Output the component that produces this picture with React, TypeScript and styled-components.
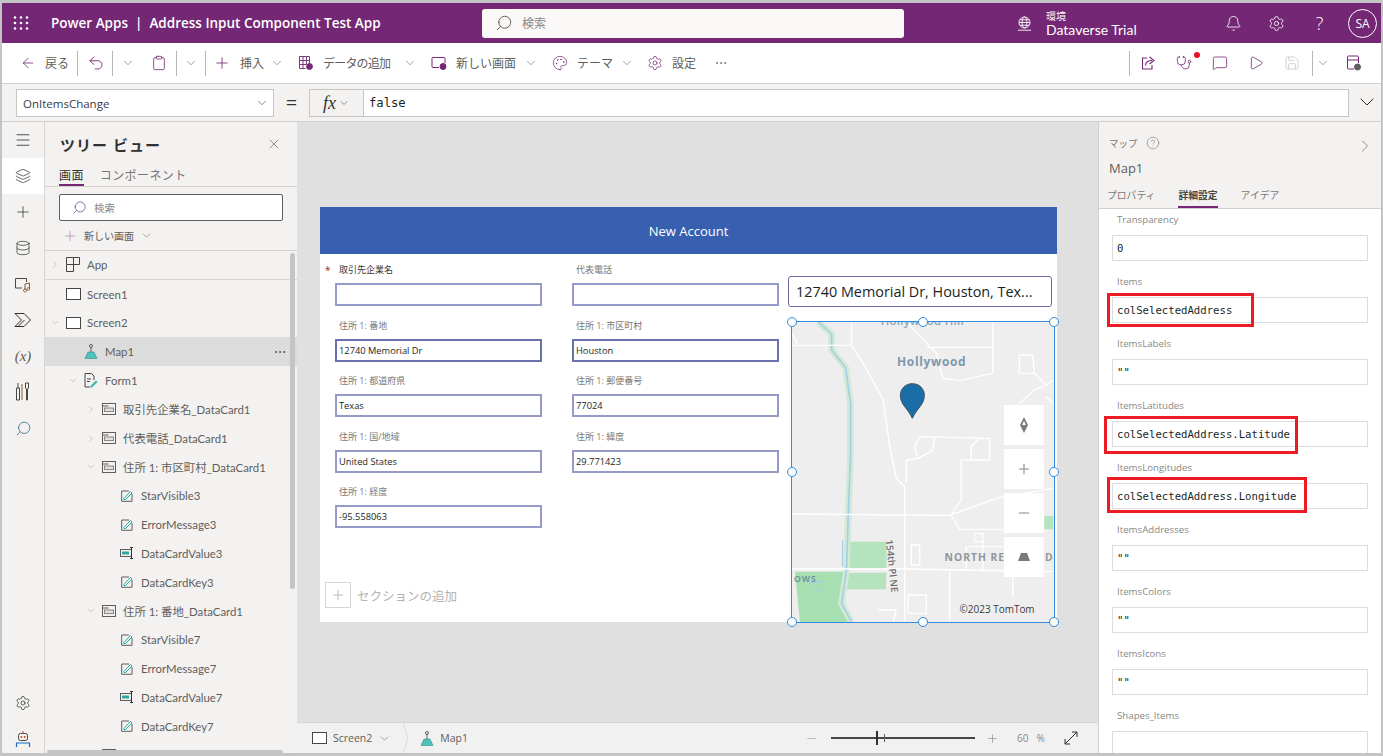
import React from 'react';
import styled, { createGlobalStyle } from 'styled-components';
import {
  ArrowLeft, Bell, ChevronDown, ChevronRight, Clipboard, CircleHelp, Database, Layers, Menu,
  MessageSquare, Minus, MoreHorizontal, Palette, Play, Plus, Save, Search, Settings, Stethoscope, Undo2, X,
} from 'lucide-react';

const SANS = `"Open Sans", "Noto Sans CJK JP", sans-serif`;
const NARROW = `"Lato", "Noto Sans CJK JP", sans-serif`;
const MONO = `"DejaVu Sans Mono", "Liberation Mono", monospace`;
const PURPLE = '#742774';

const Global = createGlobalStyle`
  html, body { margin: 0; padding: 0; background: #c4c4c4; }
  * { box-sizing: border-box; }
  body { font-family: ${SANS}; }
`;

const Root = styled.div`
  width: 1383px; height: 756px; padding: 3px 2px; background: #c4c4c4;
  display: flex; flex-direction: column; overflow: hidden; color: #605e5c; font-size: 12px;
`;

/* ---- top bar ---- */
const TopBar = styled.header`
  height: 40px; flex: none; background: ${PURPLE}; color: #fff; display: flex; align-items: center;
`;
const Waffle = styled.svg`margin-left: 11px; flex: none;`;
const AppTitle = styled.div`
  margin-left: 22px; width: 431px; flex: none; font-size: 13.5px; font-weight: 600; white-space: nowrap;
`;
const SearchBox = styled.div`
  width: 422px; height: 29px; flex: none; background: #faf9f8; border-radius: 3px; display: flex; align-items: center;
  padding-left: 13px; gap: 9px; color: #8a8886; font-size: 12px;
`;
const MirrorSearch = styled(Search)`transform: scaleX(-1); flex: none;`;
const Env = styled.div`margin-left: 113px; display: flex; align-items: center; gap: 14px;`;
const EnvText = styled.div`display: flex; flex-direction: column; line-height: 14px;`;
const EnvSmall = styled.span`font-size: 10px;`;
const EnvName = styled.span`font-family: ${NARROW}; font-size: 14px;`;
const TopIcons = styled.div`margin-left: auto; display: flex; align-items: center;`;
const TopIcon = styled.div`width: 43px; display: flex; justify-content: center; align-items: center;`;
const HelpMark = styled.span`font-size: 18px; font-weight: 300; line-height: 20px;`;
const Avatar = styled.div`
  width: 29px; height: 29px; border-radius: 50%; border: 1px solid #fff; margin: 0 4px 0 7px;
  display: flex; align-items: center; justify-content: center; font-size: 12px;
`;

/* ---- toolbar ---- */
const Toolbar = styled.div`
  height: 41px; flex: none; background: #fff; border-bottom: 1px solid #d2d0ce;
  display: flex; align-items: center; padding-left: 18px; color: ${PURPLE};
`;
const ToolItem = styled.div<{ $ml?: number }>`
  display: flex; align-items: center; gap: 9px; margin-left: ${p => p.$ml ?? 0}px; flex: none;
  svg { flex: none; }
`;
const ToolLabel = styled.span<{ $w: number; $tight?: boolean }>`
  width: ${p => p.$w}px; color: #605e5c; font-size: 12px; white-space: nowrap; flex: none;
  letter-spacing: ${p => (p.$tight ? '-0.8px' : '0')};
`;
const ToolChevron = styled(ChevronDown)<{ $ml?: number }>`
  margin-left: ${p => p.$ml ?? 0}px; color: #605e5c; flex: none;
`;
const Sep = styled.span<{ $ml?: number }>`
  width: 1px; height: 25px; background: #b8b6b4; flex: none; margin-left: ${p => p.$ml ?? 0}px;
`;
const ToolRight = styled.div`margin-left: auto; display: flex; align-items: center; padding-right: 9px;`;
const RightBtn = styled.div<{ $w?: number; $ml?: number }>`
  width: ${p => p.$w ?? 36}px; margin-left: ${p => p.$ml ?? 0}px; display: flex; justify-content: center; position: relative;
`;
const RedDot = styled.span`
  position: absolute; width: 6px; height: 6px; background: #e81123; border-radius: 50%; right: 2px; top: -3px;
`;

/* ---- formula bar ---- */
const FormulaBar = styled.div`
  height: 38px; flex: none; background: #f3f2f1; border-bottom: 1px solid #d2d0ce;
  display: flex; align-items: flex-start; padding: 5px 0 0 14px;
`;
const PropSelect = styled.div`
  width: 258px; height: 28px; flex: none; background: #fff; border: 1px solid #c8c6c4; display: flex; align-items: center;
  justify-content: space-between; padding: 0 4px 0 6px; font-size: 11.5px; color: #3b3a39;
`;
const Equals = styled.div`width: 35px; flex: none; text-align: center; font-size: 20px; line-height: 28px; color: #323130;`;
const Fx = styled.div`
  width: 54px; height: 28px; flex: none; background: #f3f2f1; border: 1px solid #c8c6c4; border-right: 0;
  display: flex; align-items: center; justify-content: center; gap: 2px; color: #323130;
`;
const FxText = styled.span`font-family: "Liberation Serif", serif; font-style: italic; font-size: 18px;`;
const FormulaInput = styled.div`
  width: 986px; height: 28px; flex: none; background: #fff; border: 1px solid #c8c6c4; padding-left: 5px;
  display: flex; align-items: center; font-family: ${MONO}; font-size: 12.2px; color: #201f1e;
`;
const FormulaExpand = styled.div`flex: 1; display: flex; justify-content: center; padding: 1px 0 0 3px; color: #323130;`;

/* ---- main ---- */
const Main = styled.div`flex: 1; min-height: 0; display: flex;`;
const Rail = styled.nav`
  width: 43px; flex: none; background: #f3f2f1; border-right: 1px solid #d8d6d4; display: flex; flex-direction: column; color: #323130;
`;
const RailItem = styled.div<{ $active?: boolean }>`
  height: 36px; flex: none; display: flex; align-items: center; justify-content: center;
  background: ${p => (p.$active ? '#fff' : 'transparent')};
`;
const RailBottom = styled.div`margin-top: auto; margin-bottom: -4px; display: flex; flex-direction: column;`;

const TreePanel = styled.aside`
  width: 252px; flex: none; background: #f3f2f1; display: flex; flex-direction: column; position: relative; overflow: hidden;
`;
const TreeHead = styled.div`
  height: 44px; flex: none; display: flex; align-items: center; justify-content: space-between; padding: 0 15px;
`;
const TreeTitle = styled.div`font-size: 15px; font-weight: 600; color: #323130; letter-spacing: 1px;`;
const TreeTabs = styled.div`
  height: 20px; flex: none; display: flex; gap: 16px; padding-left: 14px; border-bottom: 1px solid #d2d0ce; box-sizing: content-box;
`;
const TreeTab = styled.div<{ $active?: boolean }>`
  height: 20px; font-size: 12px; line-height: 19px; color: ${p => (p.$active ? '#323130' : '#797775')};
  border-bottom: 2px solid ${p => (p.$active ? PURPLE : 'transparent')}; letter-spacing: 0.4px;
`;
const TreeSearch = styled.div`
  margin: 7px 0 0 14px; width: 224px; height: 27px; flex: none; background: #fff; border: 1px solid #605e5c; border-radius: 2px;
  display: flex; align-items: center; padding-left: 12px; gap: 7px; color: #8a8886; font-size: 10.5px;
`;
const NewScreen = styled.div`
  height: 30px; flex: none; border-bottom: 1px solid #d2d0ce; display: flex; align-items: center; padding-left: 17px; gap: 6px; font-size: 10px;
`;
const PlusTint = styled(Plus)`color: #b88fb8;`;
const TreeList = styled.div`flex: 1; min-height: 0; overflow: hidden;`;
const TreeRow = styled.div<{ $level: number; $selected?: boolean; $line?: boolean }>`
  height: 28.8px; display: flex; align-items: center; position: relative; font-family: ${NARROW};
  padding-left: ${p => 5 + p.$level * 18}px; white-space: nowrap; font-size: 11.4px;
  background: ${p => (p.$selected ? '#dcdcdc' : 'transparent')};
  border-bottom: ${p => (p.$line ? '1px solid #d8d6d4' : '0')};
`;
const Caret = styled.span`width: 10px; margin-right: 5px; flex: none; display: flex; justify-content: center; color: #8a8886;`;
const TreeIcon = styled.span`width: 16px; margin-right: 6px; flex: none; display: flex; justify-content: center;`;
const RowMore = styled(MoreHorizontal)`position: absolute; left: 228px; color: #484644;`;
const VScroll = styled.div`
  position: absolute; left: 245px; top: 131px; width: 5px; height: 336px; background: #c4c4c4; border-radius: 3px;
`;
const HScroll = styled.div`
  position: absolute; left: 2px; bottom: 0; width: 236px; height: 3px; background: #c4c4c4; border-radius: 2px 2px 0 0;
`;

/* ---- canvas ---- */
const Canvas = styled.section`width: 801px; flex: none; background: #e0e0e0; display: flex; flex-direction: column;`;
const Stage = styled.div`flex: 1; min-height: 0; padding: 85px 0 0 23px;`;
const Screen = styled.div`width: 737px; height: 415px; background: #fff; display: flex; flex-direction: column;`;
const FormHeader = styled.div`
  height: 47px; flex: none; background: #3860b0; color: #fff; font-size: 13px; display: flex; align-items: center; justify-content: center;
`;
const FormBody = styled.div`flex: 1; min-height: 0; display: flex;`;
const FormLeft = styled.div`width: 468px; flex: none; display: flex; flex-direction: column;`;
const FieldGrid = styled.div`
  display: grid; grid-template-columns: 207px 207px; column-gap: 30px; padding: 7px 0 0 15px; grid-auto-rows: 55.6px;
`;
const Field = styled.div`display: flex; flex-direction: column; position: relative;`;
const FieldLabel = styled.label<{ $dark?: boolean }>`
  height: 18px; margin-bottom: 4px; padding-left: 4px; line-height: 18px; font-size: 9px; color: ${p => (p.$dark ? '#3b3a39' : '#7a7876')};
`;
const Star = styled.span`position: absolute; left: -10px; top: 2px; color: #a4262c; font-size: 10px; line-height: 14px;`;
const FieldInput = styled.div<{ $strong?: boolean }>`
  height: 23px; background: #fff; border: 2px solid ${p => (p.$strong ? '#6a72ad' : '#959bc6')};
  display: flex; align-items: center; padding-left: 2px; font-size: 9.3px; color: #201f1e;
`;
const AddSection = styled.div`
  margin-top: auto; margin-bottom: 14px; margin-left: 5px; display: flex; align-items: center; gap: 6px; color: #b4b2b0; font-size: 12.5px;
`;
const AddBox = styled.div`
  width: 26px; height: 26px; border: 1px solid #d8d6d4; display: flex; align-items: center; justify-content: center; color: #a19f9d;
`;
const FormRight = styled.div`flex: 1; display: flex; flex-direction: column;`;
const AddressBox = styled.div`
  margin-top: 22px; width: 264px; height: 31px; flex: none; border: 1px solid #6b70ab; border-radius: 3px; background: #fff;
  display: flex; align-items: center; padding-left: 7px; font-size: 14.4px; color: #201f1e; white-space: nowrap; overflow: hidden;
`;
const MapFrame = styled.div`
  position: relative; margin: 14px 0 0 3px; width: 264px; height: 302px; flex: none; border: 1px solid #2f8ae0; background: #eeeeee;
`;
const MapSvg = styled.svg`display: block; width: 100%; height: 100%;`;
const Handle = styled.span<{ $x: number; $y: number }>`
  position: absolute; left: ${p => p.$x}%; top: ${p => p.$y}%; width: 10px; height: 10px; margin: -5px 0 0 -5px;
  border-radius: 50%; border: 1.5px solid #2f8ae0; background: #fff;
`;
const MapControls = styled.div`
  position: absolute; right: 10px; top: 83px; display: flex; flex-direction: column; gap: 4px;
`;
const MapButton = styled.div`
  width: 40px; height: 40px; background: #fff; display: flex; align-items: center; justify-content: center; color: #8a8a8a;
`;

const BottomBar = styled.div`
  height: 31px; flex: none; background: #f1f1f1; border-top: 1px solid #d8d6d4; display: flex; align-items: center; position: relative; padding-left: 15px; font-size: 10.5px;
`;
const Crumb = styled.div`display: flex; align-items: center; gap: 6px;`;
const CrumbDivider = styled.svg`margin: 0 11px 0 12px; flex: none;`;
const Zoom = styled.div`margin-left: auto; display: flex; align-items: center; padding-right: 20px;`;
const ZoomTrack = styled.div`position: relative; width: 144px; height: 2px; background: #484644; margin: 0 11px 0 13px;`;
const ZoomThumb = styled.span`position: absolute; left: 45px; top: -6px; width: 2px; height: 14px; background: #323130;`;
const ZoomTick = styled.span`position: absolute; left: 53px; top: -3px; width: 1px; height: 8px; background: #605e5c;`;
const ZoomValue = styled.span`margin-left: 18px; color: #8a8886; font-size: 10px; display: flex; gap: 8px; width: 38px;`;
const ExpandIcon = styled.svg`margin-left: 9px; flex: none;`;

/* ---- property panel ---- */
const PropPanel = styled.aside`
  width: 283px; flex: none; background: #fff; border-left: 1px solid #d2d0ce; display: flex; flex-direction: column; overflow: hidden;
`;
const PropHead = styled.div`
  height: 87px; flex: none; background: #f3f2f1; border-bottom: 1px solid #d2d0ce; padding: 13px 0 0 10px; position: relative;
`;
const PropKind = styled.div`display: flex; align-items: center; gap: 8px; font-size: 9.5px; height: 16px; color: #797775;`;
const PropName = styled.div`font-size: 13px; margin-top: 8px; line-height: 18px; color: #605e5c;`;
const PropClose = styled(ChevronRight)`position: absolute; right: 6px; top: 14px; color: #797775;`;
const PropTabs = styled.div`position: absolute; left: 8px; bottom: 0; display: flex; gap: 23px;`;
const PropTab = styled.div<{ $active?: boolean }>`
  height: 24px; font-size: 9.8px; line-height: 23px; color: ${p => (p.$active ? '#484644' : '#797775')};
  font-weight: ${p => (p.$active ? 600 : 400)};
  border-bottom: 2px solid ${p => (p.$active ? PURPLE : 'transparent')};
`;
const PropBody = styled.div`flex: 1; min-height: 0; overflow: hidden; padding-left: 13px;`;
const PropField = styled.div`height: 62px; display: flex; flex-direction: column;`;
const PropLabel = styled.div`height: 20px; margin-bottom: 6px; padding: 1px 0 0 5px; font-size: 9.7px; line-height: 20px; color: #8a8886;`;
const PropInput = styled.div`
  position: relative; width: 256px; height: 26px; border: 1.5px solid #dcdcdc; background: #fff; display: flex; align-items: center;
  padding-left: 4px; font-family: ${MONO}; font-size: 10.65px; color: #201f1e;
`;
const RedMark = styled.span<{ $l: number; $t: number; $w: number; $h: number }>`
  position: absolute; left: ${p => p.$l}px; top: ${p => p.$t}px; width: ${p => p.$w}px; height: ${p => p.$h}px; border: 3px solid #ed1c24;
`;

/* ---- drawn icons ---- */
const ScreenIcon = () => (
  <svg width="15" height="12" viewBox="0 0 15 12"><rect x=".5" y=".5" width="14" height="11" fill="#fff" stroke="#484644" /></svg>
);
const AppIcon = () => (
  <svg width="15" height="15" viewBox="0 0 15 15" fill="none" stroke="#484644"><path d="M.5.5h13v7h-13zM.5 7.5v7h7v-14" /></svg>
);
const MapIcon = () => (
  <svg width="14" height="15" viewBox="0 0 14 15"><circle cx="7" cy="2" r="1.5" fill="none" stroke="#605e5c" /><path d="M7 3.5V8" stroke="#605e5c" /><path d="M4 8h6l3 6.5H1z" fill="#4fc1bb" stroke="#2b8f8a" strokeWidth=".6" /></svg>
);
const FormIcon = () => (
  <svg width="14" height="15" viewBox="0 0 14 15" fill="none"><path d="M1 .5h6.5L10 3v4M1 .5v13.5h5" stroke="#484644" /><path d="M3 6h4M3 8.5h3" stroke="#484644" /><path d="M6.5 13l5.5-5.5 1.5 1.5L8 14.5H6.5z" fill="#37b3ac" /></svg>
);
const CardIcon = () => (
  <svg width="14" height="12" viewBox="0 0 14 12" fill="none" stroke="#605e5c"><rect x=".5" y=".5" width="13" height="11" /><rect x="2.5" y="5" width="9" height="3.5" fill="#e1dfdd" stroke="#8a8886" /><path d="M.5 3h6" /></svg>
);
const LabelIcon = () => (
  <svg width="12" height="12" viewBox="0 0 12 12" fill="none"><path d="M8 1H.7v10.3H11V4" stroke="#605e5c" /><path d="M3 8.5L9.5 1.5 11 3 4.5 9.5H3z" stroke="#18a8a0" fill="#fff" /></svg>
);
const TextInputIcon = () => (
  <svg width="15" height="12" viewBox="0 0 15 12" fill="none"><rect x=".5" y="2.5" width="11" height="7" stroke="#605e5c" /><rect x="2" y="4.5" width="7" height="3" fill="#2fa8a3" /><path d="M10 .5h3M10 11.5h3M11.5.5v11" stroke="#323130" /></svg>
);
const DataIcon = () => (
  <svg width="16" height="16" viewBox="0 0 16 16" fill="none" stroke={PURPLE} strokeWidth=".9"><path d="M1.5 1.5h10v8M1.5 1.5v12h6M1.5 5.5h10M1.5 9.5h7M5 1.5v12M8.5 1.5v8" /><circle cx="11.5" cy="11.5" r="3" fill={PURPLE} /></svg>
);
const NewScreenIcon = () => (
  <svg width="16" height="16" viewBox="0 0 16 16" fill="none" stroke={PURPLE}><path d="M8 12.5H2a1 1 0 0 1-1-1v-8a1 1 0 0 1 1-1h11a1 1 0 0 1 1 1V8" /><circle cx="12" cy="11.5" r="3" fill={PURPLE} /></svg>
);
const PublishIcon = () => (
  <svg width="16" height="18" viewBox="0 0 16 18" fill="none" stroke={PURPLE}><path d="M8 15H2.5a1 1 0 0 1-1-1V3a1 1 0 0 1 1-1h9a1 1 0 0 1 1 1v6M1.5 6h11" /><circle cx="11.5" cy="13" r="3" fill="#605e5c" stroke="#605e5c" /></svg>
);
const ShareIcon = () => (
  <svg width="16" height="16" viewBox="0 0 16 16" fill="none" stroke={PURPLE} strokeWidth="1.1"><path d="M7 3H2.5v11h9.5v-4" /><path d="M5.5 10.5C5.5 7 8 5.5 12 5.5M9.5 2L14 5.5 9.5 9" /></svg>
);
const GlobeIcon = () => (
  <svg width="15" height="15" viewBox="0 0 15 15" fill="none" stroke="#fff" strokeWidth=".9"><circle cx="7.5" cy="6.5" r="5.5" /><ellipse cx="7.5" cy="6.5" rx="2.4" ry="5.5" /><path d="M2 6.5h11M2.8 3.8h9.4M2.8 9.2h9.4M1 14.2h13" /></svg>
);
const RailMedia = () => (
  <svg width="18" height="18" viewBox="0 0 18 18" fill="none" stroke="#484644"><path d="M8 13H1.5V3.5h11V7" /><path d="M9.5 15.5a1.5 1.5 0 1 0 0-.1zM11 15V9l4.5-1v6M15.5 14a1.3 1.3 0 1 0 0 .1" stroke="#8c5a2b" /></svg>
);
const RailFlow = () => (
  <svg width="18" height="16" viewBox="0 0 18 16" fill="none" stroke="#323130"><path d="M1 1.5h9l6.5 6.5L10 14.5H1L7.5 8zM4 14.5l6.5-6.5" /></svg>
);
const RailVar = styled.span`
  font-family: "Liberation Serif", serif; font-size: 15px; font-style: italic; color: #6b5a4a;
`;
const RailTools = () => (
  <svg width="16" height="20" viewBox="0 0 16 20" fill="none" stroke="#484644"><path d="M3 1v5M1.5 6h3v12h-3zM10.5 1h3v5l-1 1v11h-1V7l-1-1z" /><path d="M7 2v16" stroke="#8c5a2b" /></svg>
);
const RailBot = () => (
  <svg width="18" height="18" viewBox="0 0 18 18" fill="none"><rect x="4.5" y="3.5" width="9" height="7" rx="2" stroke="#484644" /><circle cx="7.3" cy="7" r="1" fill="#c8501e" /><circle cx="10.7" cy="7" r="1" fill="#c8501e" /><path d="M9 1v2.5" stroke="#c8501e" /><path d="M2.5 17v-4h13v4" stroke="#0f6cbd" strokeWidth="1.2" /></svg>
);

const Row = ({ level, caret, icon, children, selected, line }: {
  level: number; caret?: 'r' | 'd'; icon: React.ReactNode; children: React.ReactNode; selected?: boolean; line?: boolean;
}) => (
  <TreeRow $level={level} $selected={selected} $line={line}>
    <Caret>
      {caret === 'r' && <ChevronRight size={13} strokeWidth={1} />}
      {caret === 'd' && <ChevronDown size={13} strokeWidth={1} />}
    </Caret>
    <TreeIcon>{icon}</TreeIcon>
    {children}
    {selected && <RowMore size={14} strokeWidth={1.4} />}
  </TreeRow>
);

const PROP_FIELDS: { label: string; value: string; mark?: [number, number, number, number] }[] = [
  { label: 'Transparency', value: '0' },
  { label: 'Items', value: 'colSelectedAddress', mark: [-6, -5, 147, 34] },
  { label: 'ItemsLabels', value: '""' },
  { label: 'ItemsLatitudes', value: 'colSelectedAddress.Latitude', mark: [-9, -6, 194, 38] },
  { label: 'ItemsLongitudes', value: 'colSelectedAddress.Longitude', mark: [-6, -7, 200, 36] },
  { label: 'ItemsAddresses', value: '""' },
  { label: 'ItemsColors', value: '""' },
  { label: 'ItemsIcons', value: '""' },
  { label: 'Shapes_Items', value: '' },
];

const FORM_FIELDS = [
  { label: '取引先企業名', value: '', dark: true, star: true },
  { label: '代表電話', value: '' },
  { label: '住所 1: 番地', value: '12740 Memorial Dr', strong: true },
  { label: '住所 1: 市区町村', value: 'Houston', strong: true },
  { label: '住所 1: 都道府県', value: 'Texas' },
  { label: '住所 1: 郵便番号', value: '77024' },
  { label: '住所 1: 国/地域', value: 'United States' },
  { label: '住所 1: 緯度', value: '29.771423' },
  { label: '住所 1: 経度', value: '-95.558063' },
];

const HANDLES: [number, number][] = [[0, 0], [50, 0], [100, 0], [0, 50], [100, 50], [0, 100], [50, 100], [100, 100]];

const ROADS = [
  'M36 226H215L250 280L310 390L330 530L350 625L375 650V1056',
  'M215 156V228',
  'M36 190L52 222',
  'M380 156L470 250L490 325L540 332L640 310V156',
  'M440 232H640',
  'M36 732L510 736L660 682L822 655',
  'M36 897H375L822 905',
  'M380 640V570L415 565L405 530L420 500L630 505V570H545V690L515 735L540 778H670',
  'M575 570V530L600 505',
  'M465 500L460 540L415 565',
  'M720 255H760L765 310L720 310ZM765 310L800 345L765 360L720 400M800 345L822 330M800 380L822 400',
  'M510 905V1056M585 790H610V815H585ZM560 830H670M560 830V900M610 815V900',
  'M395 825H420V885H395ZM385 975H440V1030H385ZM700 905V980',
  'M295 1020H350L340 1056',
];

const MapDrawing = () => (
  <MapSvg viewBox="36 156 788 900" preserveAspectRatio="none">
    <rect x="36" y="156" width="788" height="900" fill="#eeeeee" />
    <path d="M45 905H190L185 1000L215 1056H60Z" fill="#a8dfb0" />
    <path d="M210 815H320V895H210ZM200 908H320L318 958H200ZM795 738H822V778H795Z" fill="#b5e3bd" />
    <path d="M115 156L155 192V240L197 292L212 400V560L205 740L200 900L185 1000L215 1056" fill="none" stroke="#d3e9d5" strokeWidth="20" />
    <path d="M115 156L155 192V240L197 292L212 400V560L205 740L200 900L185 1000L215 1056" fill="none" stroke="#a5cfe8" strokeWidth="5" />
    <path d="M188 810V890" stroke="#a5cfe8" strokeWidth="4" />
    <path d="M85 935H130M100 960H125" stroke="#a5cfe8" strokeWidth="5" />
    {ROADS.map(d => <path key={d} d={d} fill="none" stroke="#fff" strokeWidth="4" />)}
    <text x="303" y="165" fontSize="34" fontWeight="600" letterSpacing="1" fill="#8aa3b8" fontFamily={SANS}>Hollywood Hill</text>
    <text x="352" y="287" fontSize="36" fontWeight="700" letterSpacing="2" fill="#7d98ad" fontFamily={SANS}>Hollywood</text>
    <text x="495" y="873" fontSize="31" fontWeight="700" letterSpacing="3" fill="#8f979c" fontFamily={SANS}>NORTH RE</text>
    <text x="797" y="873" fontSize="31" fontWeight="700" fill="#8f979c" fontFamily={SANS}>D</text>
    <text x="42" y="937" fontSize="26" fontWeight="600" letterSpacing="3" fill="#5f8e9e" fontFamily={SANS}>OWS</text>
    <text x="318" y="810" transform="rotate(84 318 810)" fontSize="29" fontWeight="600" fill="#6d6d6d" fontFamily={SANS}>154th Pl NE</text>
    <text x="540" y="1028" fontSize="30" fill="#3b3a39" fontFamily={SANS}>©2023 TomTom</text>
    <path d="M398 445C385 415 362 405 362 376C362 355 378 341 398 341C418 341 434 355 434 376C434 405 411 415 398 445Z" fill="#1a6ea8" stroke="#3c4f5c" strokeWidth="3" />
  </MapSvg>
);

export default function App() {
  return (
    <Root>
      <Global />
      <TopBar>
        <Waffle width="16" height="14" viewBox="0 0 16 14" fill="#fff">
          {[1.5, 7, 12.5].flatMap(y => [2, 8, 14].map(x => <circle key={`${x}-${y}`} cx={x} cy={y} r="1.3" />))}
        </Waffle>
        <AppTitle>Power Apps&nbsp; |&nbsp; Address Input Component Test App</AppTitle>
        <SearchBox><MirrorSearch size={18} strokeWidth={1.1} color="#484644" />検索</SearchBox>
        <Env>
          <GlobeIcon />
          <EnvText><EnvSmall>環境</EnvSmall><EnvName>Dataverse Trial</EnvName></EnvText>
        </Env>
        <TopIcons>
          <TopIcon><Bell size={17} strokeWidth={1.2} /></TopIcon>
          <TopIcon><Settings size={17} strokeWidth={1.2} /></TopIcon>
          <TopIcon><HelpMark>?</HelpMark></TopIcon>
          <Avatar>SA</Avatar>
        </TopIcons>
      </TopBar>

      <Toolbar>
        <ToolItem><ArrowLeft size={16} strokeWidth={1.2} /><ToolLabel $w={24}>戻る</ToolLabel></ToolItem>
        <Sep $ml={8} />
        <ToolItem $ml={9}><Undo2 size={18} strokeWidth={1.2} /></ToolItem>
        <Sep $ml={7} />
        <ToolChevron size={14} strokeWidth={1} $ml={8} />
        <ToolItem $ml={16}><Clipboard size={16} strokeWidth={1.2} /></ToolItem>
        <Sep $ml={9} />
        <ToolChevron size={14} strokeWidth={1} $ml={7} />
        <Sep $ml={7} />
        <ToolItem $ml={7}><Plus size={18} strokeWidth={1.1} /><ToolLabel $w={24}>挿入</ToolLabel></ToolItem>
        <ToolChevron size={14} strokeWidth={1} $ml={6} />
        <ToolItem $ml={14}><DataIcon /><ToolLabel $w={73} $tight>データの追加</ToolLabel></ToolItem>
        <ToolChevron size={14} strokeWidth={1} $ml={7} />
        <ToolItem $ml={14}><NewScreenIcon /><ToolLabel $w={61}>新しい画面</ToolLabel></ToolItem>
        <ToolChevron size={14} strokeWidth={1} $ml={7} />
        <ToolItem $ml={14}><Palette size={16} strokeWidth={1.1} /><ToolLabel $w={36}>テーマ</ToolLabel></ToolItem>
        <ToolChevron size={14} strokeWidth={1} $ml={7} />
        <ToolItem $ml={13}><Settings size={16} strokeWidth={1.1} /><ToolLabel $w={24}>設定</ToolLabel></ToolItem>
        <ToolItem $ml={18}><MoreHorizontal size={14} strokeWidth={1.2} color="#605e5c" /></ToolItem>
        <ToolRight>
          <Sep />
          <RightBtn><ShareIcon /></RightBtn>
          <RightBtn><Stethoscope size={16} strokeWidth={1.2} /><RedDot /></RightBtn>
          <RightBtn><MessageSquare size={16} strokeWidth={1.2} /></RightBtn>
          <RightBtn><Play size={16} strokeWidth={1.2} /></RightBtn>
          <RightBtn><Save size={16} strokeWidth={1.2} color="#c8c6c4" /></RightBtn>
          <Sep $ml={2} />
          <RightBtn $w={20}><ToolChevron size={14} strokeWidth={1} /></RightBtn>
          <RightBtn $ml={3}><PublishIcon /></RightBtn>
        </ToolRight>
      </Toolbar>

      <FormulaBar>
        <PropSelect>OnItemsChange<ChevronDown size={14} strokeWidth={1} /></PropSelect>
        <Equals>=</Equals>
        <Fx><FxText>fx</FxText><ChevronDown size={12} strokeWidth={1} /></Fx>
        <FormulaInput>false</FormulaInput>
        <FormulaExpand><ChevronDown size={24} strokeWidth={1} /></FormulaExpand>
      </FormulaBar>

      <Main>
        <Rail>
          <RailItem><Menu size={18} strokeWidth={1.1} /></RailItem>
          <RailItem $active><Layers size={16} strokeWidth={1.1} /></RailItem>
          <RailItem><Plus size={18} strokeWidth={1} /></RailItem>
          <RailItem><Database size={16} strokeWidth={1.1} /></RailItem>
          <RailItem><RailMedia /></RailItem>
          <RailItem><RailFlow /></RailItem>
          <RailItem><RailVar>(x)</RailVar></RailItem>
          <RailItem><RailTools /></RailItem>
          <RailItem><Search size={17} strokeWidth={1.1} style={{ transform: 'scaleX(-1)' }} color="#2b6a8f" /></RailItem>
          <RailBottom>
            <RailItem><Settings size={16} strokeWidth={1.1} /></RailItem>
            <RailItem><RailBot /></RailItem>
          </RailBottom>
        </Rail>

        <TreePanel>
          <TreeHead><TreeTitle>ツリー ビュー</TreeTitle><X size={16} strokeWidth={1} /></TreeHead>
          <TreeTabs><TreeTab $active>画面</TreeTab><TreeTab>コンポーネント</TreeTab></TreeTabs>
          <TreeSearch><MirrorSearch size={15} strokeWidth={1.2} color="#6b4a8a" />検索</TreeSearch>
          <NewScreen><PlusTint size={16} strokeWidth={1.2} />新しい画面<ChevronDown size={13} strokeWidth={1} /></NewScreen>
          <TreeList>
            <Row level={0} caret="r" icon={<AppIcon />} line>App</Row>
            <Row level={0} icon={<ScreenIcon />}>Screen1</Row>
            <Row level={0} caret="d" icon={<ScreenIcon />}>Screen2</Row>
            <Row level={1} icon={<MapIcon />} selected>Map1</Row>
            <Row level={1} caret="d" icon={<FormIcon />}>Form1</Row>
            <Row level={2} caret="r" icon={<CardIcon />}>取引先企業名_DataCard1</Row>
            <Row level={2} caret="r" icon={<CardIcon />}>代表電話_DataCard1</Row>
            <Row level={2} caret="d" icon={<CardIcon />}>住所 1: 市区町村_DataCard1</Row>
            <Row level={3} icon={<LabelIcon />}>StarVisible3</Row>
            <Row level={3} icon={<LabelIcon />}>ErrorMessage3</Row>
            <Row level={3} icon={<TextInputIcon />}>DataCardValue3</Row>
            <Row level={3} icon={<LabelIcon />}>DataCardKey3</Row>
            <Row level={2} caret="d" icon={<CardIcon />}>住所 1: 番地_DataCard1</Row>
            <Row level={3} icon={<LabelIcon />}>StarVisible7</Row>
            <Row level={3} icon={<LabelIcon />}>ErrorMessage7</Row>
            <Row level={3} icon={<TextInputIcon />}>DataCardValue7</Row>
            <Row level={3} icon={<LabelIcon />}>DataCardKey7</Row>
            <Row level={2} caret="r" icon={<CardIcon />}>住所 1: 都道府県_DataCard1</Row>
          </TreeList>
          <VScroll />
          <HScroll />
        </TreePanel>

        <Canvas>
          <Stage>
            <Screen>
              <FormHeader>New Account</FormHeader>
              <FormBody>
                <FormLeft>
                  <FieldGrid>
                    {FORM_FIELDS.map(f => (
                      <Field key={f.label}>
                        {f.star && <Star>*</Star>}
                        <FieldLabel $dark={f.dark}>{f.label}</FieldLabel>
                        <FieldInput $strong={f.strong}>{f.value}</FieldInput>
                      </Field>
                    ))}
                  </FieldGrid>
                  <AddSection><AddBox><Plus size={16} strokeWidth={1} /></AddBox>セクションの追加</AddSection>
                </FormLeft>
                <FormRight>
                  <AddressBox>12740 Memorial Dr, Houston, Tex...</AddressBox>
                  <MapFrame>
                    <MapDrawing />
                    <MapControls>
                      <MapButton>
                        <svg width="10" height="16" viewBox="0 0 10 16"><path d="M5 0L9 8L5 16L1 8Z" fill="#7a7a7a" /><path d="M5 4L7 8H3Z" fill="#fff" /></svg>
                      </MapButton>
                      <MapButton><Plus size={16} strokeWidth={1.6} /></MapButton>
                      <MapButton><Minus size={16} strokeWidth={1.6} /></MapButton>
                      <MapButton>
                        <svg width="12" height="8" viewBox="0 0 12 8"><path d="M3 0H9L12 8H0Z" fill="#7a7a7a" /></svg>
                      </MapButton>
                    </MapControls>
                    {HANDLES.map(([x, y]) => <Handle key={`${x}-${y}`} $x={x} $y={y} />)}
                  </MapFrame>
                </FormRight>
              </FormBody>
            </Screen>
          </Stage>
          <BottomBar>
            <Crumb><ScreenIcon /><span>Screen2</span><ChevronDown size={13} strokeWidth={1} /></Crumb>
            <CrumbDivider width="6" height="30" viewBox="0 0 6 30" fill="none" stroke="#dcdcdc"><path d="M0 0L5 15L0 30" /></CrumbDivider>
            <Crumb><MapIcon /><span>Map1</span></Crumb>
            <Zoom>
              <Minus size={13} strokeWidth={1.2} color="#a19f9d" />
              <ZoomTrack><ZoomThumb /><ZoomTick /></ZoomTrack>
              <Plus size={13} strokeWidth={1.2} color="#8a8886" />
              <ZoomValue><span>60</span><span>%</span></ZoomValue>
              <ExpandIcon width="14" height="14" viewBox="0 0 14 14" fill="none" stroke="#323130"><path d="M1 13L13 1M8 1h5v5M1 8v5h5" /></ExpandIcon>
            </Zoom>
          </BottomBar>
        </Canvas>

        <PropPanel>
          <PropHead>
            <PropKind>マップ<CircleHelp size={14} strokeWidth={1} /></PropKind>
            <PropName>Map1</PropName>
            <PropClose size={20} strokeWidth={1} />
            <PropTabs>
              <PropTab>プロパティ</PropTab>
              <PropTab $active>詳細設定</PropTab>
              <PropTab>アイデア</PropTab>
            </PropTabs>
          </PropHead>
          <PropBody>
            {PROP_FIELDS.map(f => (
              <PropField key={f.label}>
                <PropLabel>{f.label}</PropLabel>
                <PropInput>
                  {f.value}
                  {f.mark && <RedMark $l={f.mark[0]} $t={f.mark[1]} $w={f.mark[2]} $h={f.mark[3]} />}
                </PropInput>
              </PropField>
            ))}
          </PropBody>
        </PropPanel>
      </Main>
    </Root>
  );
}
